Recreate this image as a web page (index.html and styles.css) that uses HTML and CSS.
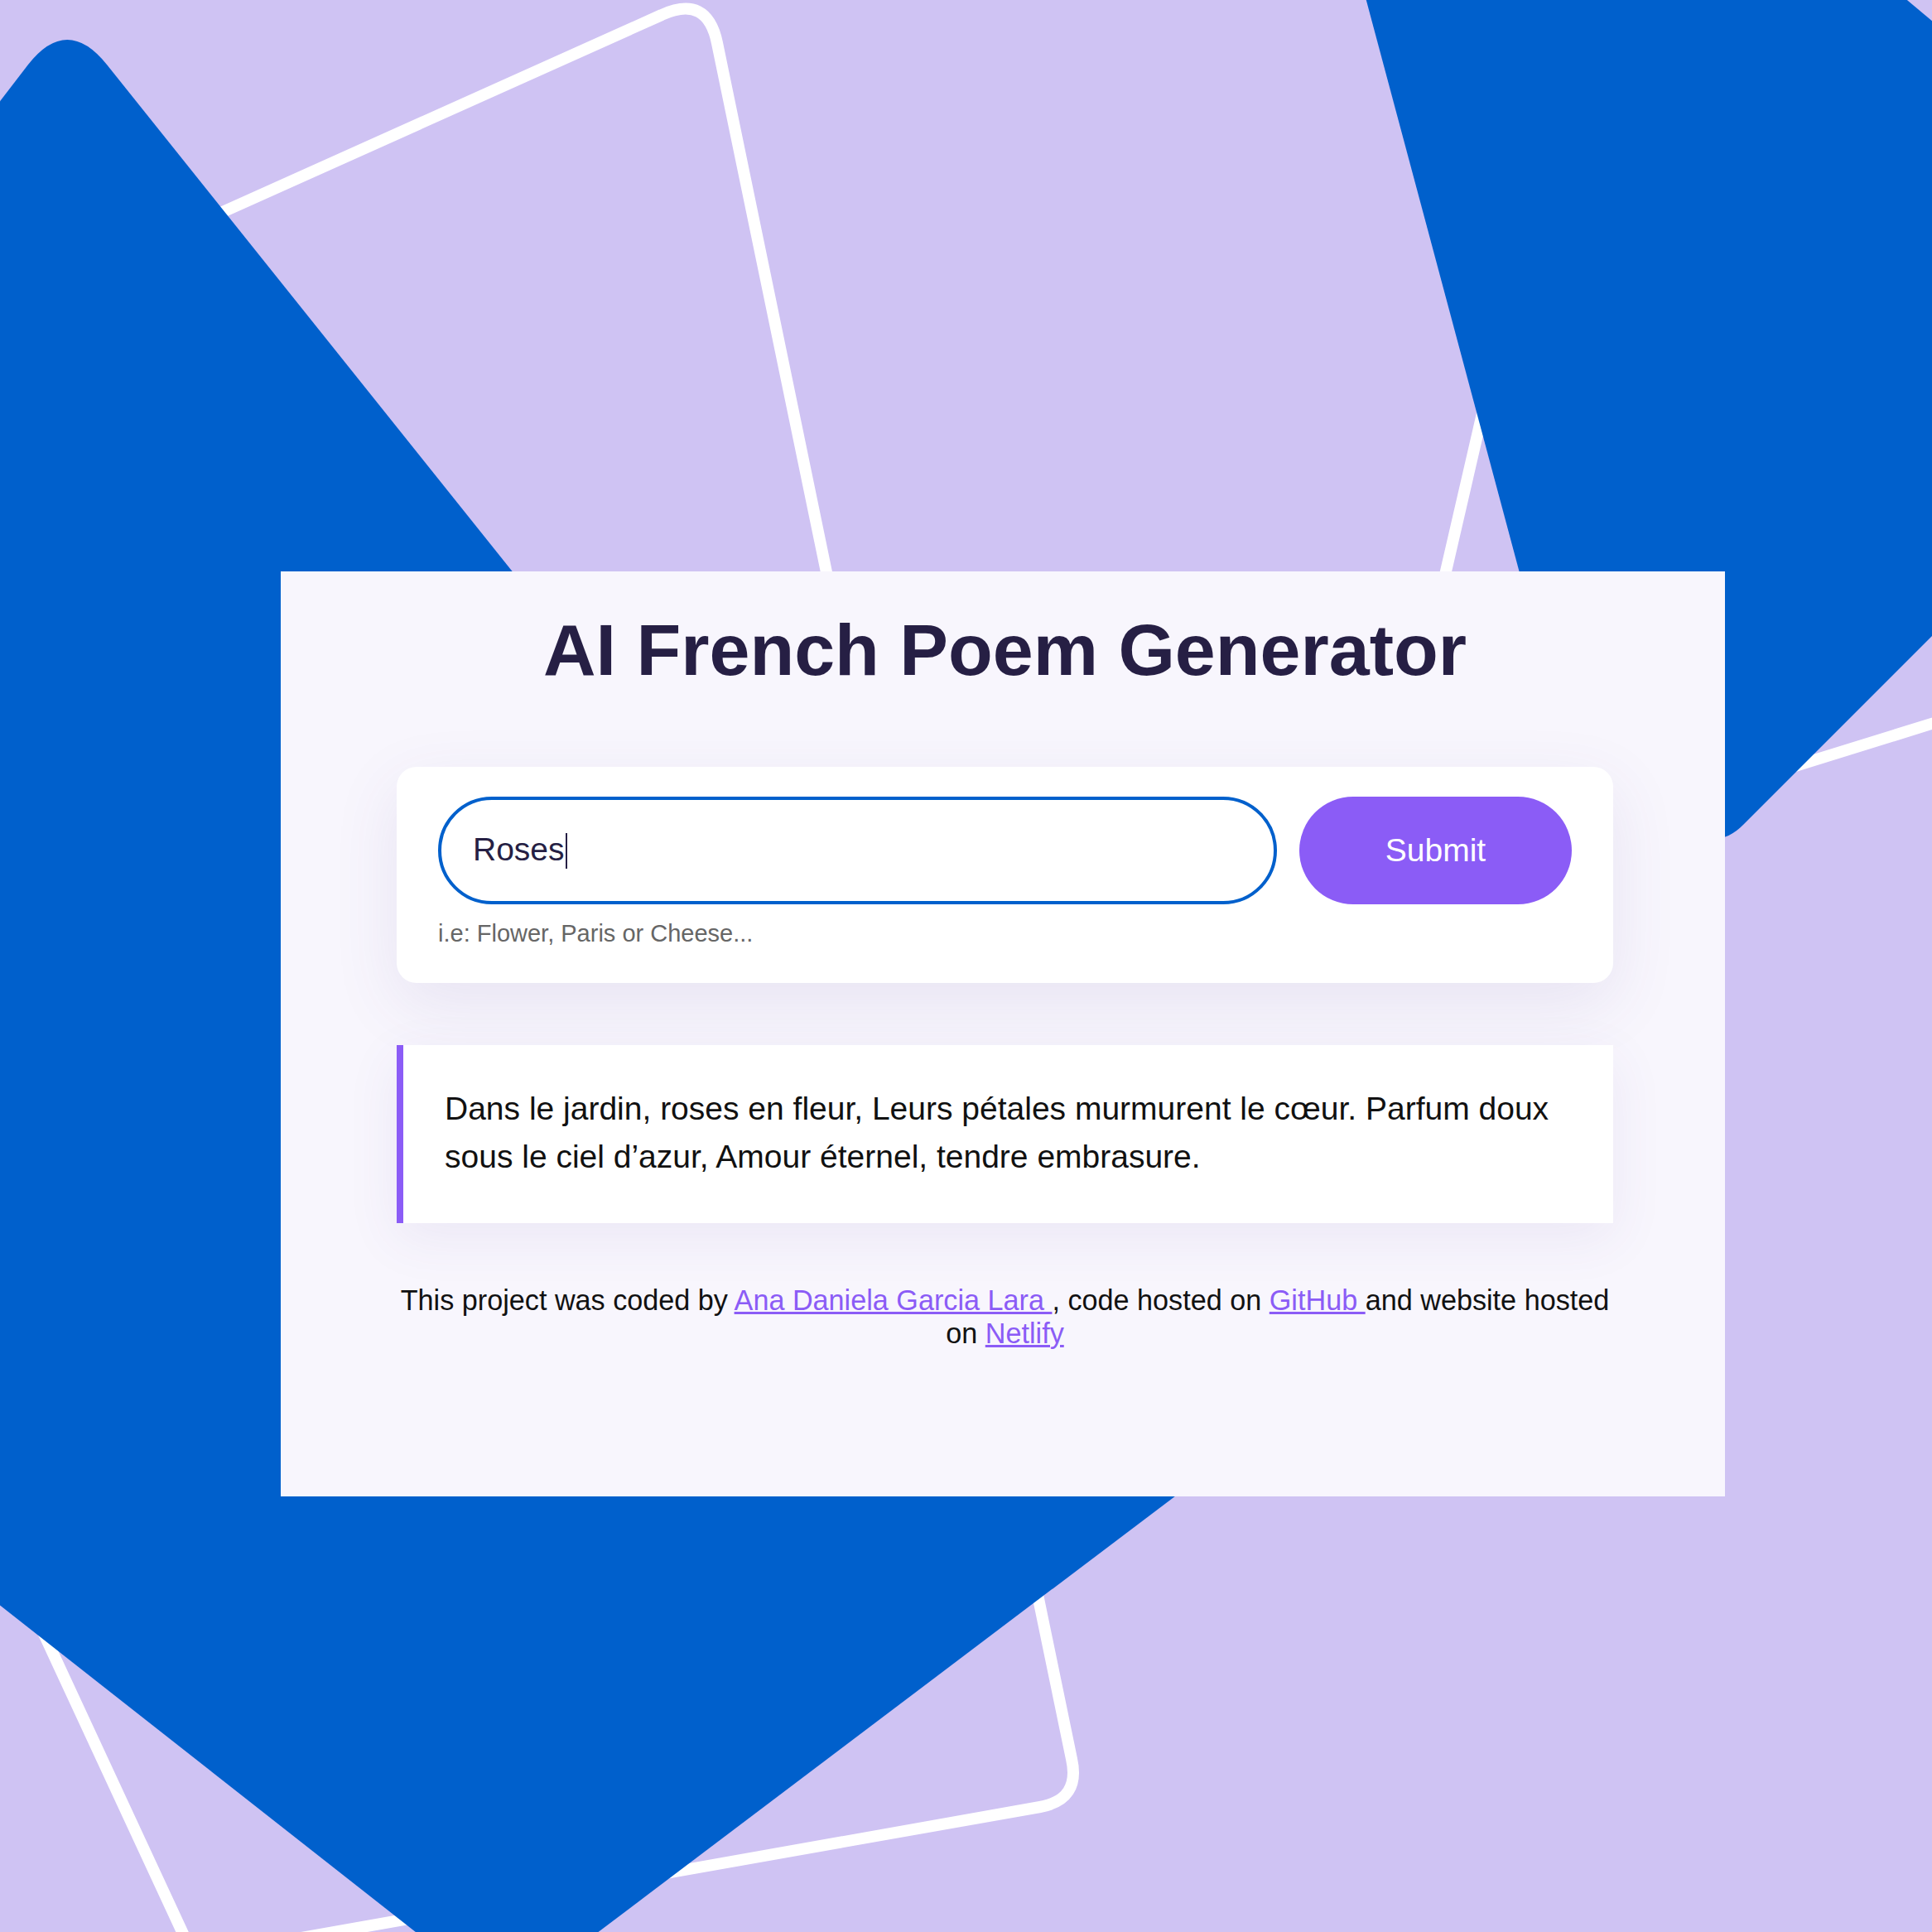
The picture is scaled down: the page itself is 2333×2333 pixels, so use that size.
FILE: index.html
```html
<!DOCTYPE html>
<html lang="en">
<head>
<meta charset="utf-8">
<title>AI French Poem Generator</title>
<link rel="stylesheet" href="styles.css">
</head>
<body>
<svg class="backdrop" viewBox="0 0 2333 2333" aria-hidden="true">
  <path class="outline" d="M 799 18 Q 854 -7 866 52 L 1294 2124 Q 1305 2173 1256 2182 L 234 2363 L -569 632 Z"/>
  <path class="outline" d="M 1836 300 L 2600 300 L 2600 791 L 1655 1084 Z"/>
  <path class="solid" d="M 34 78 Q 81 18 129 78 L 1477 1763 L 610 2418 L -871 1254 Z"/>
  <path class="solid" d="M 1623 -100 L 2183 -100 L 2738 363 L 2105 996 Q 2088 1013 2070 1013 L 1921 1013 Z"/>
</svg>
<main class="card">
  <h1 class="title">AI French Poem Generator</h1>
  <section class="search">
    <form class="search-form">
      <div class="field"><span class="field-text">Roses</span></div>
      <button class="submit" type="button">Submit</button>
    </form>
    <p class="hint">i.e: Flower, Paris or Cheese...</p>
  </section>
  <div class="poem">Dans le jardin, roses en fleur, Leurs pétales murmurent le cœur. Parfum doux sous le ciel d’azur, Amour éternel, tendre embrasure.</div>
  <footer class="credits"><span>This project was coded by </span><a href="#">Ana Daniela Garcia Lara </a><span>, code hosted on </span><a href="#">GitHub </a><span>and website hosted </span><span>on </span><a href="#">Netlify</a></footer>
</main>
</body>
</html>
```
FILE: styles.css
```css
html, body {
  margin: 0;
}

body {
  position: relative;
  width: 2333px;
  height: 2333px;
  box-sizing: border-box;
  padding-top: 690px;
  overflow: hidden;
  background: #cfc3f3;
  font-family: "Liberation Sans", Arial, sans-serif;
}

.backdrop {
  position: absolute;
  left: 0;
  top: 0;
  width: 2333px;
  height: 2333px;
}

.outline {
  fill: none;
  stroke: #ffffff;
  stroke-width: 14;
  stroke-linejoin: round;
}

.solid {
  fill: #0060cc;
}

.card {
  position: relative;
  display: block;
  width: 1744px;
  margin-left: 339px;
  box-sizing: border-box;
  padding: 42px 135px 177px 140px;
  background: #f8f6fd;
}

.title {
  margin: 0;
  font-size: 88px;
  line-height: 1.2;
  font-weight: 700;
  text-align: center;
  color: #261f44;
}

.search {
  margin-top: 88px;
  padding: 36px 50px 43px;
  background: #ffffff;
  border-radius: 24px;
  box-shadow: 0 25px 80px rgba(90, 70, 150, 0.10);
}

.search-form {
  display: flex;
  gap: 27px;
  margin: 0;
}

.field {
  flex: 1;
  display: flex;
  align-items: center;
  height: 130px;
  box-sizing: border-box;
  padding-left: 38px;
  border: 4px solid #0060cc;
  border-radius: 65px;
  background: #ffffff;
  font-size: 39px;
  color: #261f44;
}

.field-text::after {
  content: "";
  display: inline-block;
  width: 2px;
  height: 43px;
  margin-left: 1px;
  vertical-align: -10px;
  background: #261f44;
}

.submit {
  width: 329px;
  height: 130px;
  border: none;
  border-radius: 65px;
  background: #8b5cf6;
  color: #ffffff;
  font-family: "Liberation Sans", Arial, sans-serif;
  font-size: 39px;
  padding: 0;
}

.hint {
  margin: 19px 0 0;
  font-size: 29px;
  color: #666666;
}

.poem {
  margin-top: 75px;
  padding: 48px 50px 51px;
  background: #ffffff;
  border-left: 8px solid #8b5cf6;
  font-size: 39px;
  line-height: 58px;
  color: #111111;
  box-shadow: 0 18px 60px rgba(90, 70, 150, 0.08);
}

.credits {
  margin-top: 73px;
  font-size: 34.2px;
  line-height: 40px;
  text-align: center;
  color: #111111;
}

.credits a {
  color: #8b5cf6;
  text-decoration: underline;
}
```
